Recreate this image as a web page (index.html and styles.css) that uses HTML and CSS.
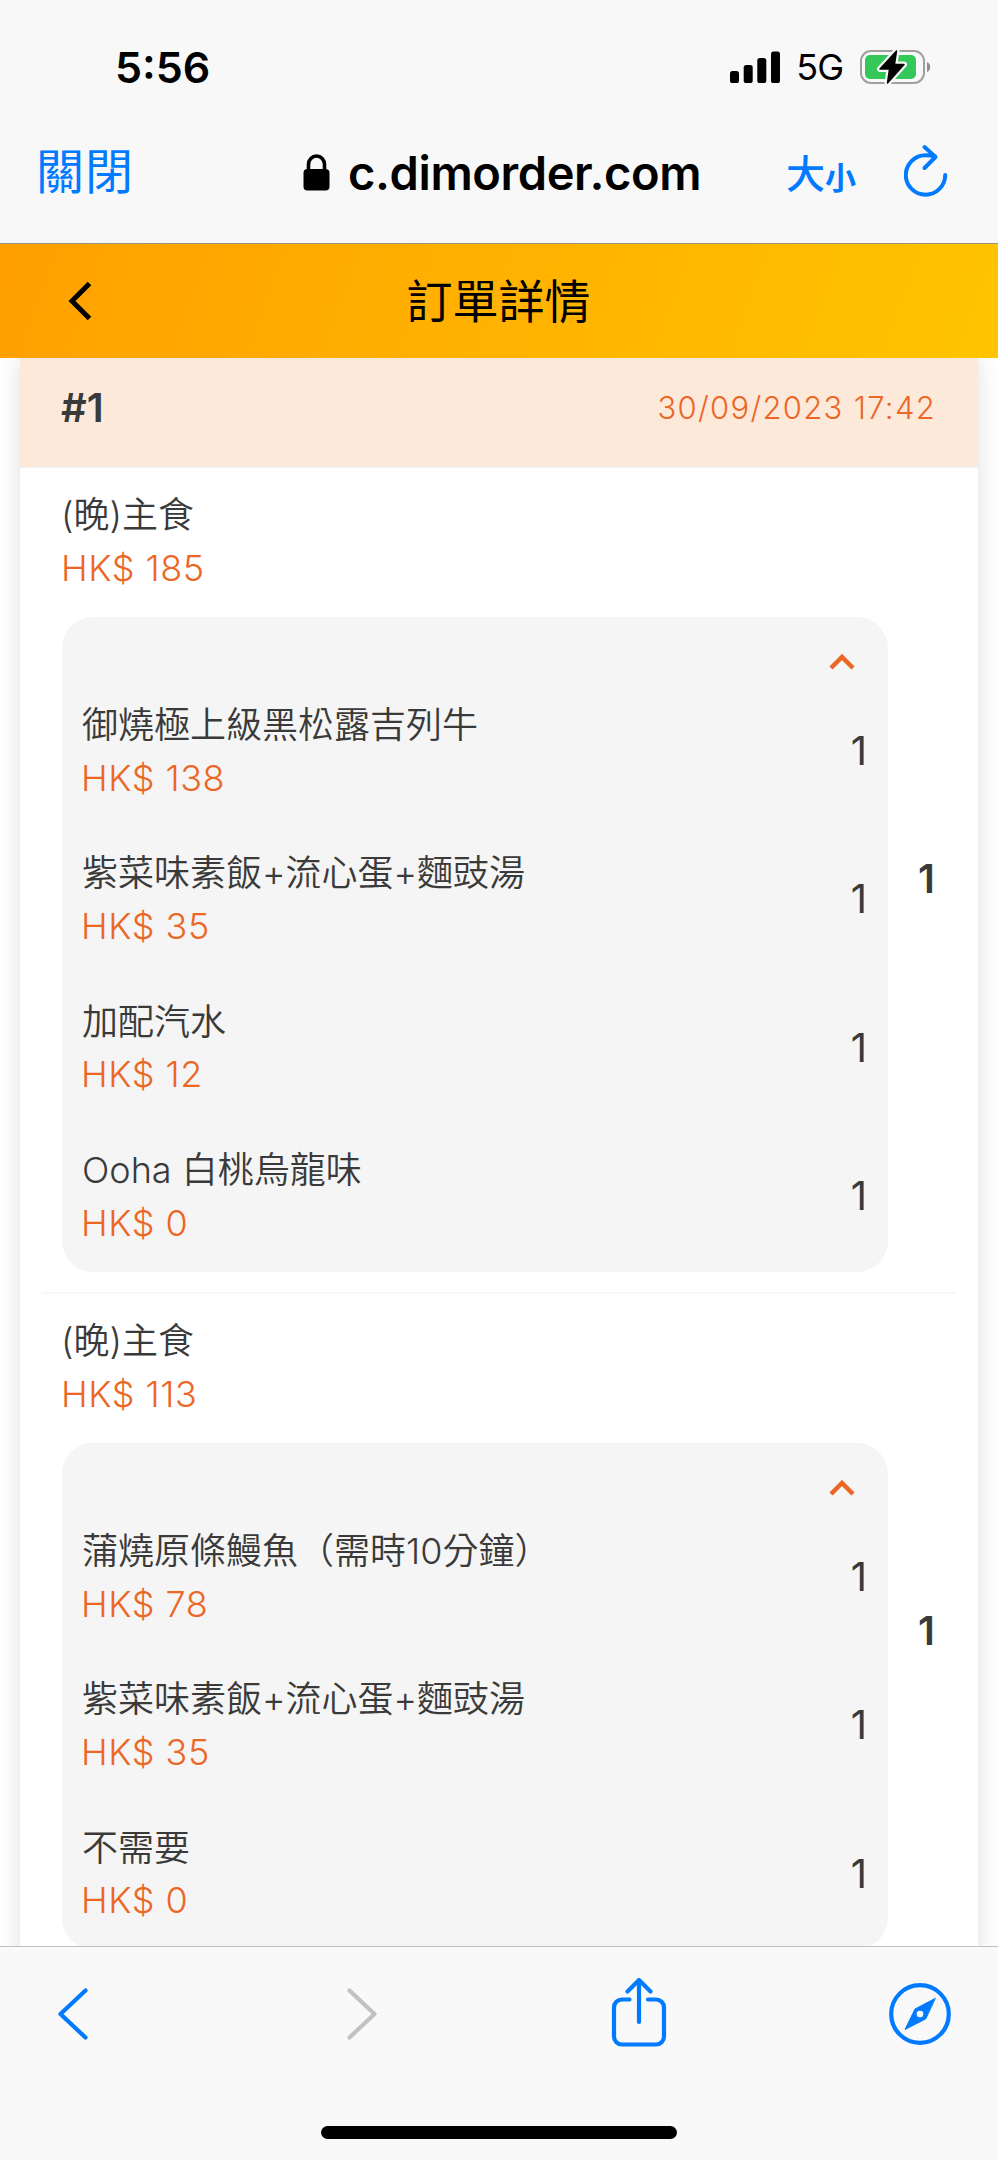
FILE: index.html
```html
<!DOCTYPE html>
<html lang="zh-Hant">
  <head>
    <meta charset="UTF-8" />
    <title>訂單詳情</title>
    <link rel="stylesheet" href="styles.css">
  </head>
  <body>
    <div class="top">
      <div class="status">
        <span class="time">5:56</span>
        <div class="signal">
          <svg class="bars" width="50" height="32" viewBox="0 0 50 32">
            <rect x="0" y="20" width="9" height="12" rx="2.6" />
            <rect x="13.7" y="14" width="9" height="18" rx="2.6" />
            <rect x="27.3" y="7" width="9" height="25" rx="2.6" />
            <rect x="41" y="0.5" width="9" height="31.5" rx="2.6" />
          </svg>
          <span class="net">5G</span>
          <svg class="battery" width="72" height="36" viewBox="0 0 72 36">
            <rect x="1" y="2" width="63" height="32" rx="10" fill="none" stroke="#a0a0a0" stroke-width="2" />
            <path d="M67 13a5.5 5.5 0 0 1 0 10z" fill="#8e8e8e" />
            <rect x="5" y="6" width="51" height="24" rx="5" fill="#34c759" />
            <path d="M36.5 2L20 20h9.500L27.500 34 44 15.500h-9.500z" fill="#f8f8f8" stroke="#f8f8f8" stroke-width="6" stroke-linejoin="round" />
            <path d="M36.500 2L20 20h9.500L27.500 34 44 15.500h-9.500z" fill="#000" stroke="#000" stroke-width="1.500" stroke-linejoin="round" />
          </svg>
        </div>
      </div>
      <div class="address">
        <a class="close">關閉</a>
        <div class="url">
          <svg width="27" height="37" viewBox="0 0 27 37">
            <path d="M5.500 17v-6.500a8 8.500 0 0 1 16 0V17" fill="none" stroke="#000" stroke-width="3.600" />
            <rect x="0.500" y="15" width="26" height="21.500" rx="4" />
          </svg>
          <span>c.dimorder.com</span>
        </div>
        <div class="tools">
          <span class="big">大</span><span class="small">小</span>
          <svg class="reload" width="44" height="54" viewBox="0 0 44 54">
            <path d="M31 12.500C28 11.500 25 11.300 21.500 11.300A19.700 19.700 0 1 0 41.200 31" />
            <path d="M20.500 3L31.500 13 20.500 24" />
          </svg>
        </div>
      </div>
    </div>

    <div class="hd">
      <svg width="24" height="40" viewBox="0 0 24 40">
        <path d="M21.500 2.500L4 20l17.500 17.500" />
      </svg>
      <h1>訂單詳情</h1>
    </div>

    <div class="bd">
      <div class="card">
        <div class="card-hd">
          <span class="no">#1</span>
          <span class="date">30/09/2023 17:42</span>
        </div>
        <ul class="orders">
          <li class="order">
            <div class="main">
              <p class="name">(晚)主食</p>
              <p class="price">HK$ 185</p>
              <div class="sets">
                <svg class="up" width="26" height="16" viewBox="0 0 26 16"><path d="M2 14L13 3l11 11" /></svg>
                <ul>
                  <li class="item">
                    <div>
                      <p class="name">御燒極上級黑松露吉列牛</p>
                      <p class="price">HK$ 138</p>
                    </div>
                    <span class="num">1</span>
                  </li>
                  <li class="item">
                    <div>
                      <p class="name">紫菜味素飯+流心蛋+麵豉湯</p>
                      <p class="price">HK$ 35</p>
                    </div>
                    <span class="num">1</span>
                  </li>
                  <li class="item">
                    <div>
                      <p class="name">加配汽水</p>
                      <p class="price">HK$ 12</p>
                    </div>
                    <span class="num">1</span>
                  </li>
                  <li class="item">
                    <div>
                      <p class="name">Ooha 白桃烏龍味</p>
                      <p class="price">HK$ 0</p>
                    </div>
                    <span class="num">1</span>
                  </li>
                </ul>
              </div>
            </div>
            <span class="total">1</span>
          </li>
          <li class="order">
            <div class="main">
              <p class="name">(晚)主食</p>
              <p class="price">HK$ 113</p>
              <div class="sets">
                <svg class="up" width="26" height="16" viewBox="0 0 26 16"><path d="M2 14L13 3l11 11" /></svg>
                <ul>
                  <li class="item">
                    <div>
                      <p class="name">蒲燒原條鰻魚（需時10分鐘）</p>
                      <p class="price">HK$ 78</p>
                    </div>
                    <span class="num">1</span>
                  </li>
                  <li class="item">
                    <div>
                      <p class="name">紫菜味素飯+流心蛋+麵豉湯</p>
                      <p class="price">HK$ 35</p>
                    </div>
                    <span class="num">1</span>
                  </li>
                  <li class="item">
                    <div>
                      <p class="name">不需要</p>
                      <p class="price">HK$ 0</p>
                    </div>
                    <span class="num">1</span>
                  </li>
                </ul>
              </div>
            </div>
            <span class="total">1</span>
          </li>
        </ul>
      </div>
    </div>

    <div class="ft">
      <div class="bar">
        <svg width="62" height="72" viewBox="0 0 62 72">
          <path d="M43.500 12.500L18.500 36l25 23.500" />
        </svg>
        <svg class="off" width="62" height="72" viewBox="0 0 62 72">
          <path d="M25.500 12.500L50.500 36l-25 23.500" />
        </svg>
        <svg width="62" height="72" viewBox="0 0 62 72">
          <path d="M22.500 21.500h-7.500a8 8 0 0 0-8 8v29a8 8 0 0 0 8 8h34a8 8 0 0 0 8-8v-29a8 8 0 0 0-8-8h-8M32 44V3M20.500 13.500L32 2l11.500 11.500" />
        </svg>
        <svg width="62" height="72" viewBox="0 0 62 72">
          <circle cx="31" cy="36" r="28.800" />
          <path class="needle" d="M46 20.500L26 31 16 51.500 36.500 41zM31 32.200a3.900 3.900 0 1 1 0 7.800 3.900 3.900 0 0 1 0-7.800z" />
        </svg>
      </div>
      <div class="home"></div>
    </div>
  </body>
</html>
```

FILE: styles.css
```css
* {
  margin: 0;
  padding: 0;
  box-sizing: border-box;
}
body {
  width: 998px;
  height: 2160px;
  display: flex;
  flex-direction: column;
  overflow: hidden;
  background-color: #fff;
  color: #3a3a3a;
  font-family: Inter, "Noto Sans CJK TC", sans-serif;
}
ul {
  list-style: none;
}
svg {
  display: block;
  flex: none;
}

/* 狀態列和網址列 */
.top {
  height: 244px;
  flex: none;
  background-color: #f8f8f8;
  border-bottom: 1px solid #9a8f78;
  color: #000;
}
.status {
  height: 134px;
  padding: 0 66px 0 115px;
  display: flex;
  justify-content: space-between;
  align-items: center;
}
.time {
  font-size: 43px;
  font-weight: 600;
}
.signal {
  display: flex;
  align-items: center;
}
.net {
  margin: 0 17px 0 16px;
  font-size: 36px;
  letter-spacing: -1px;
}
.address {
  height: 76px;
  padding: 0 50px 0 36px;
  display: grid;
  grid-template-columns: 267px 1fr auto;
  align-items: center;
}
.close {
  font-size: 48px;
  line-height: 76px;
  letter-spacing: 1px;
  color: #007aff;
}
.url {
  display: flex;
  align-items: center;
  gap: 18px;
  font-size: 47px;
  font-weight: 600;
  letter-spacing: -0.4px;
}
.tools {
  display: flex;
  align-items: center;
  color: #007aff;
  font-weight: 500;
}
.big {
  margin-bottom: 3px;
  font-size: 39px;
}
.small {
  margin: 6px 48px 0 0;
  font-size: 31px;
  font-weight: 700;
}
.reload {
  margin-bottom: 2px;
  fill: none;
  stroke: #007aff;
  stroke-width: 4;
  stroke-linecap: round;
  stroke-linejoin: round;
}

/* 標題 */
.hd {
  height: 114px;
  flex: none;
  padding: 0 68px;
  display: grid;
  grid-template-columns: 24px 1fr 24px;
  align-items: center;
  background: linear-gradient(110deg, #ffa000, #ffc400);
  color: #000;
}
.hd svg {
  fill: none;
  stroke: #000;
  stroke-width: 5;
}
.hd h1 {
  margin: 0 1px 7px 0;
  text-align: center;
  font-size: 46px;
  font-weight: 400;
}

.bd {
  height: 1588px;
  flex: none;
  padding: 0 20px;
  overflow: hidden;
}
.card {
  height: 1640px;
  box-shadow: 0 0 22px rgba(0, 0, 0, .13);
  background-color: #fff;
}
.card-hd {
  height: 109px;
  padding: 0 42px 10px 41px;
  display: flex;
  justify-content: space-between;
  align-items: center;
  background-color: #fce9da;
}
.no {
  font-size: 40px;
  font-weight: 600;
}
.date {
  font-size: 31px;
  font-weight: 350;
  letter-spacing: 1.300px;
  color: #ec6726;
}
.orders {
  border-top: 1px solid #f3f3f3;
  padding: 0 22px;
}
.order {
  padding: 20px 21px 20px 20px;
  display: flex;
  align-items: center;
}
.order + .order {
  border-top: 2px solid #f7f7f7;
}
.main {
  width: 826px;
}
.name,
.price {
  height: 53.700px;
  font-size: 36px;
  font-weight: 350;
  white-space: nowrap;
}
/* 中文比數字高一點，行高加大往下移 */
.name {
  line-height: 54px;
  text-indent: -1px;
}
.price {
  line-height: 53px;
  letter-spacing: 0.500px;
  text-indent: -1px;
  color: #ec6726;
}
.sets {
  margin-top: 22px;
  padding: 37px 21px 2px 20px;
  border-radius: 31px;
  background-color: #f5f5f5;
}
.sets .name {
  line-height: 57px;
  text-indent: 0;
}
.sets .price {
  line-height: 55px;
}
.up {
  margin: 0 12px 6px auto;
  fill: none;
  stroke: #ec6726;
  stroke-width: 4.500;
}
.item {
  height: 148.400px;
  display: flex;
  justify-content: space-between;
  align-items: center;
}
.num {
  font-size: 40px;
}
.total {
  flex: 1;
  margin-bottom: 2px;
  text-align: right;
  font-size: 40px;
  font-weight: 600;
}

/* 底部工具列 */
.ft {
  height: 214px;
  flex: none;
  border-top: 1px solid #c0c0c0;
  background-color: #f9f9f9;
}
.bar {
  height: 134px;
  padding: 0 47px 0 42px;
  display: flex;
  justify-content: space-between;
  align-items: center;
}
.bar svg {
  fill: none;
  stroke: #007aff;
  stroke-width: 4.200;
  stroke-linecap: round;
  stroke-linejoin: round;
}
.bar .off {
  stroke: #c2c2c2;
}
.bar .needle {
  fill: #007aff;
  fill-rule: evenodd;
  stroke-width: 1;
}
.home {
  width: 356px;
  height: 13px;
  margin: 45px auto 0;
  border-radius: 7px;
  background-color: #000;
}
```
